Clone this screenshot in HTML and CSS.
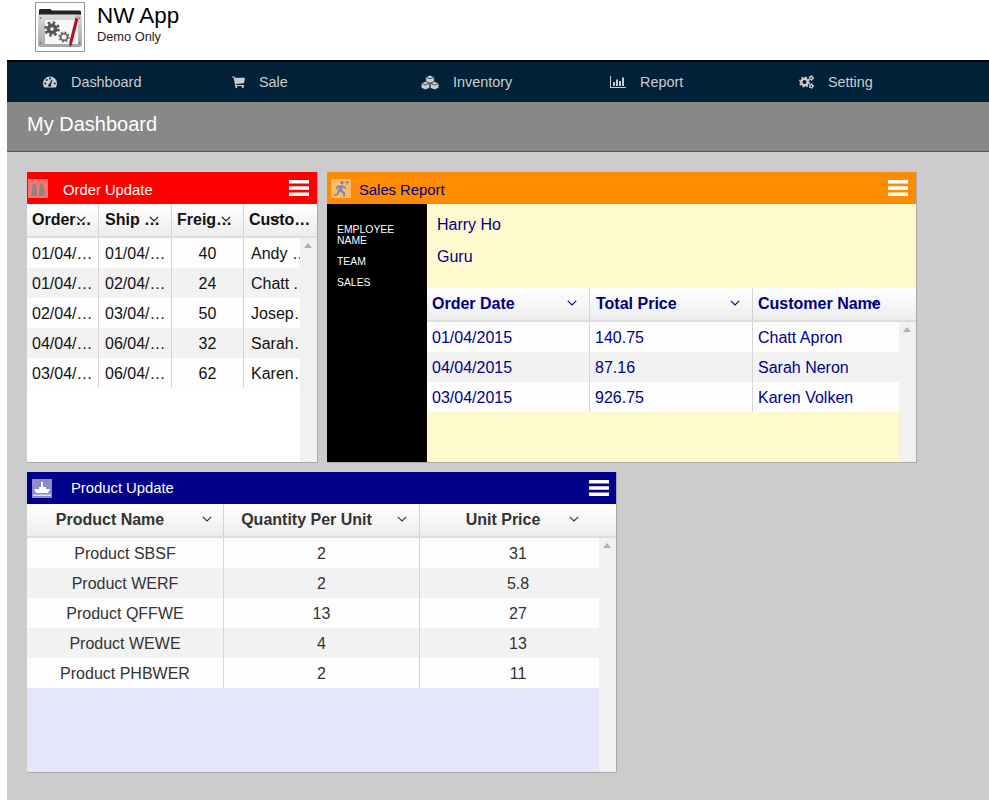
FILE: index.html
```html
<!DOCTYPE html>
<html lang="en">
<head>
    <meta charset="UTF-8">
    <meta name="viewport" content="width=device-width, initial-scale=1.0">
    <title>NW App</title>
    <link rel="stylesheet" href="styles.css">
</head>
<body>
    <!-- shared icons -->
    <svg class="sprite" aria-hidden="true">
        <symbol id="chev" viewBox="0 0 10 6"><path d="M.8.8 5 5 9.2.8" fill="none" stroke="currentColor" stroke-width="1.1"/></symbol>
        <symbol id="burger" viewBox="0 0 20 16"><path d="M0 0h20v3.6H0zM0 6.2h20v3.6H0zM0 12.4h20V16H0z" fill="#fff"/></symbol>
    </svg>

    <header class="brand">
        <div class="brand-logo">
            <svg viewBox="0 0 48 48" width="48" height="48">
                <defs>
                    <linearGradient id="folder" x1="0" y1="0" x2="0" y2="1">
                        <stop offset="0" stop-color="#dcdcdc"/>
                        <stop offset="1" stop-color="#a6a6a6"/>
                    </linearGradient>
                </defs>
                <path d="M3 7.500c0-1 .7-1.500 1.500-1.500h10l1.500 1.500h27.500c1 0 1.500.7 1.500 1.500v3H3z" fill="#222"/>
                <rect x="2" y="11.500" width="44" height="32.500" rx="2.500" fill="url(#folder)"/>
                <path d="M9 17h33v24H9z" fill="#f7f7f7"/>
                <circle cx="4.500" cy="15" r=".9" fill="#777"/><circle cx="43.500" cy="15" r=".9" fill="#777"/>
                <circle cx="4.500" cy="40" r=".9" fill="#777"/><circle cx="43.500" cy="40" r=".9" fill="#777"/>
                <circle cx="16" cy="26" r="5" fill="#555" stroke="#555" stroke-width="1"/>
                <circle cx="16" cy="26" r="6.500" fill="none" stroke="#555" stroke-width="2.500" stroke-dasharray="2.500 2.600"/>
                <circle cx="16" cy="26" r="1.800" fill="#f7f7f7"/>
                <circle cx="28" cy="34" r="3.400" fill="none" stroke="#666" stroke-width="1.800"/>
                <circle cx="28" cy="34" r="4.800" fill="none" stroke="#666" stroke-width="1.600" stroke-dasharray="1.800 1.970"/>
                <path d="M39.500 14.500 42.500 15.800 36 41l-2.800-1.300z" fill="#b3141c"/>
                <path d="M39.500 14.500 40.500 11.500l3 1.300-1 3z" fill="#e8a0b8"/>
                <path d="M33.200 39.700 36 41l-2 3z" fill="#2b2b2b"/>
            </svg>
        </div>
        <div class="brand-text">
            <div class="brand-name">NW App</div>
            <div class="brand-sub">Demo Only</div>
        </div>
    </header>

    <div class="page">
        <nav class="nav">
            <a class="nav-item">
                <svg width="14" height="12" viewBox="0 0 14 12">
                    <path d="M7 .4A7 7 0 0 0 0 7.400c0 1.600.5 3.100 1.400 4.200h11.200A7 7 0 0 0 14 7.400 7 7 0 0 0 7 .4z" fill="#ccc"/>
                    <g fill="#002138">
                        <circle cx="2.300" cy="7.500" r="1"/><circle cx="3.700" cy="4" r="1"/><circle cx="7" cy="2.600" r="1"/><circle cx="11.700" cy="7.500" r="1"/>
                        <circle cx="6.700" cy="9.300" r="1.500"/>
                        <path d="M6 8.800 8.600 3.700l1 .4L7.400 9.400z"/>
                    </g>
                </svg>
                Dashboard
            </a>
            <a class="nav-item">
                <svg width="13" height="12" viewBox="0 0 13 12">
                    <path d="M0 .4h2.400l.4 1.400H13l-1 5.400-8 .8.2 1H12v1H3.300L1.600 1.400H0z" fill="#ccc"/>
                    <circle cx="4.300" cy="10.900" r="1.100" fill="#ccc"/><circle cx="10.800" cy="10.900" r="1.100" fill="#ccc"/>
                </svg>
                Sale
            </a>
            <a class="nav-item">
                <svg width="18" height="15" viewBox="0 0 18 15">
                    <g fill="#ccc" stroke="#002138" stroke-width=".6">
                        <path d="M9 .2 13.200 2v4.800L9 8.500 4.800 6.800V2z"/>
                        <path d="M4.500 6.400 8.800 8.200v4.700L4.500 14.800.2 12.900V8.200z"/>
                        <path d="M13.500 6.400 17.800 8.200v4.700l-4.300 1.900-4.300-1.900V8.200z"/>
                    </g>
                    <path d="M5.500 2.300 9 3.700l3.500-1.400M.9 8.500l3.600 1.500L8 8.500M9.900 8.500l3.600 1.500L17 8.500" fill="none" stroke="#002138" stroke-width=".7"/>
                </svg>
                Inventory
            </a>
            <a class="nav-item">
                <svg width="16" height="12" viewBox="0 0 16 12">
                    <path d="M0 0h1v11h15v1H0z" fill="#ccc"/>
                    <path d="M3 6h2v4H3zM6 3.500h2V10H6zM9 5h2v5H9zM12 1.500h2V10h-2z" fill="#ccc"/>
                </svg>
                Report
            </a>
            <a class="nav-item">
                <svg width="15" height="14" viewBox="0 0 15 14">
                    <circle cx="5.500" cy="7" r="3.200" fill="none" stroke="#ccc" stroke-width="2.400"/>
                    <circle cx="5.500" cy="7" r="4.700" fill="none" stroke="#ccc" stroke-width="1.600" stroke-dasharray="1.850 1.840"/>
                    <circle cx="12.300" cy="3" r="1.500" fill="none" stroke="#ccc" stroke-width="1.300"/>
                    <circle cx="12.300" cy="3" r="2.400" fill="none" stroke="#ccc" stroke-width="1" stroke-dasharray="1.100 1.410"/>
                    <circle cx="12.300" cy="11" r="1.500" fill="none" stroke="#ccc" stroke-width="1.300"/>
                    <circle cx="12.300" cy="11" r="2.400" fill="none" stroke="#ccc" stroke-width="1" stroke-dasharray="1.100 1.410"/>
                </svg>
                Setting
            </a>
        </nav>

        <h1 class="page-title">My Dashboard</h1>

        <main class="board">
            <!-- Order Update -->
            <section class="panel panel-order">
                <div class="panel-head">
                    <svg class="panel-icon" viewBox="0 0 20 19">
                        <rect width="20" height="19" fill="#fff" opacity=".45"/>
                        <path d="M3 17 4.500 7l2-4 2 4 .7 10zM11 17l.5-10 2-4 2 4 1.500 10z" fill="#888"/>
                    </svg>
                    <span class="panel-title">Order Update</span>
                    <svg class="burger"><use href="#burger"/></svg>
                </div>
                <div class="grid-head cols-order">
                    <div class="cell">Order Date<svg class="chev"><use href="#chev"/></svg></div>
                    <div class="cell">Ship Date<svg class="chev"><use href="#chev"/></svg></div>
                    <div class="cell">Freig…<svg class="chev"><use href="#chev"/></svg></div>
                    <div class="cell">Customer Name<svg class="chev chev-last"><use href="#chev"/></svg></div>
                </div>
                <div class="grid-body">
                    <div class="row cols-order"><div class="cell">01/04/2015</div><div class="cell">01/04/2015</div><div class="cell center">40</div><div class="cell pad">Andy Roberts</div></div>
                    <div class="row cols-order"><div class="cell">01/04/2015</div><div class="cell">02/04/2015</div><div class="cell center">24</div><div class="cell pad">Chatt Apron</div></div>
                    <div class="row cols-order"><div class="cell">02/04/2015</div><div class="cell">03/04/2015</div><div class="cell center">50</div><div class="cell pad">Joseph Rich</div></div>
                    <div class="row cols-order"><div class="cell">04/04/2015</div><div class="cell">06/04/2015</div><div class="cell center">32</div><div class="cell pad">Sarah Neron</div></div>
                    <div class="row cols-order"><div class="cell">03/04/2015</div><div class="cell">06/04/2015</div><div class="cell center">62</div><div class="cell pad">Karen Volken</div></div>
                    <div class="scrollbar"></div>
                </div>
            </section>

            <!-- Sales Report -->
            <section class="panel panel-sales">
                <div class="panel-head">
                    <svg class="panel-icon" viewBox="0 0 20 19">
                        <rect width="20" height="19" fill="#fff" opacity=".4"/>
                        <g fill="#7d86b8">
                            <circle cx="11" cy="3.800" r="1.800"/>
                            <path d="M8 6.500h4.500l3 2.500-1 1-2.500-1.800-1 3 3 2.300V18h-1.600l-.4-3.500-3-2-2 3.500-3.500 1-.5-1.500 3-1 2-6-1.500.5-1 2.500L5 9l1.200-2.800z"/>
                            <path d="M15.500 1.500h1v1.500H18v1h-1.500v1.500h-1V4H14V3h1.500z"/>
                        </g>
                    </svg>
                    <span class="panel-title">Sales Report</span>
                    <svg class="burger"><use href="#burger"/></svg>
                </div>
                <div class="sales-layout">
                    <ul class="sales-labels">
                        <li>EMPLOYEE NAME</li>
                        <li>TEAM</li>
                        <li>SALES</li>
                    </ul>
                    <div class="sales-main">
                        <div class="sales-info">
                            <div>Harry Ho</div>
                            <div>Guru</div>
                        </div>
                        <div class="grid-head cols-sales">
                            <div class="cell">Order Date<svg class="chev"><use href="#chev"/></svg></div>
                            <div class="cell">Total Price<svg class="chev"><use href="#chev"/></svg></div>
                            <div class="cell">Customer Name<svg class="chev chev-last"><use href="#chev"/></svg></div>
                        </div>
                        <div class="grid-body">
                            <div class="row cols-sales"><div class="cell">01/04/2015</div><div class="cell">140.75</div><div class="cell">Chatt Apron</div></div>
                            <div class="row cols-sales"><div class="cell">04/04/2015</div><div class="cell">87.16</div><div class="cell">Sarah Neron</div></div>
                            <div class="row cols-sales"><div class="cell">03/04/2015</div><div class="cell">926.75</div><div class="cell">Karen Volken</div></div>
                            <div class="scrollbar"></div>
                        </div>
                    </div>
                </div>
            </section>

            <!-- Product Update -->
            <section class="panel panel-product">
                <div class="panel-head">
                    <svg class="panel-icon" viewBox="0 0 20 19">
                        <rect width="20" height="19" fill="#fff" opacity=".55"/>
                        <path d="M9 3h2v5h3v2H7V8h2z" fill="#fff"/>
                        <path d="M2 10h16l-2 4H4z" fill="#fff"/>
                        <path d="M1 15.500h18V17H1z" fill="#dfe0f5"/>
                    </svg>
                    <span class="panel-title">Product Update</span>
                    <svg class="burger"><use href="#burger"/></svg>
                </div>
                <div class="grid-head cols-product">
                    <div class="cell center head-wide">Product Name<svg class="chev"><use href="#chev"/></svg></div>
                    <div class="cell center head-wide">Quantity Per Unit<svg class="chev"><use href="#chev"/></svg></div>
                    <div class="cell center head-wide">Unit Price<svg class="chev chev-last"><use href="#chev"/></svg></div>
                </div>
                <div class="grid-body">
                    <div class="row cols-product"><div class="cell center">Product SBSF</div><div class="cell center">2</div><div class="cell center">31</div></div>
                    <div class="row cols-product"><div class="cell center">Product WERF</div><div class="cell center">2</div><div class="cell center">5.8</div></div>
                    <div class="row cols-product"><div class="cell center">Product QFFWE</div><div class="cell center">13</div><div class="cell center">27</div></div>
                    <div class="row cols-product"><div class="cell center">Product WEWE</div><div class="cell center">4</div><div class="cell center">13</div></div>
                    <div class="row cols-product"><div class="cell center">Product PHBWER</div><div class="cell center">2</div><div class="cell center">11</div></div>
                    <div class="scrollbar"></div>
                </div>
            </section>
        </main>
    </div>
</body>
</html>
```
FILE: styles.css
```css
body {
    font-family: "Liberation Sans", Arial, sans-serif;
    margin: 0;
    padding: 0;
    background-color: #fff;
    color: #333;
}
.sprite {
    display: none;
}
.brand {
    display: flex;
    gap: 12px;
    height: 60px;
    padding: 2px 0 0 35px;
    box-sizing: border-box;
}
.brand-logo {
    width: 50px;
    height: 50px;
    box-sizing: border-box;
    border: 1px solid #999;
    overflow: hidden;
}
.brand-logo svg {
    display: block;
}
.brand-text {
    padding-top: 1px;
}
.brand-name {
    font-size: 22.4px;
    line-height: 26px;
    color: #000;
}
.brand-sub {
    font-size: 12.8px;
    line-height: 16px;
    color: #222;
}
.page {
    margin-left: 7px;
}
.nav {
    display: flex;
    height: 40px;
    padding-left: 36px;
    background-color: #002138;
    border-top: 2px solid #000;
}
.nav-item {
    display: flex;
    align-items: center;
    gap: 14px;
    width: 189px;
    font-size: 14.4px;
    color: #ccc;
}
.page-title {
    margin: 0;
    padding: 10px 20px 15px;
    font-size: 20px;
    line-height: 24px;
    font-weight: normal;
    color: #fff;
    background-color: #888;
    border-bottom: 1px solid #555;
}
.board {
    display: grid;
    grid-template-columns: 291px 590px;
    grid-template-rows: 291px 301px;
    gap: 9px;
    padding: 20px 20px 27px;
    background-color: #ccc;
    align-content: start;
}
.panel {
    display: flex;
    flex-direction: column;
    box-sizing: border-box;
    border-right: 1px solid #aaa;
    border-bottom: 1px solid #aaa;
    min-width: 0;
}
.panel-head {
    display: flex;
    align-items: center;
    flex: none;
    height: 32px;
    color: #fff;
}
.panel-icon {
    width: 20px;
    height: 19px;
    flex: none;
}
.panel-title {
    font-size: 14.8px;
}
.burger {
    width: 20px;
    height: 16px;
    margin-left: auto;
    margin-right: 8px;
    flex: none;
}

/* per panel colours */
.panel-order {
    background-color: #fff;
    color: #111;
}
.panel-order .panel-head {
    background-color: #f00;
    padding-left: 1px;
}
.panel-order .panel-title {
    margin-left: 15px;
    padding-top: 3px;
}
.panel-order .cell:nth-child(2) {
    padding-left: 6px;
}
.panel-sales {
    background-color: #fffacd;
    color: #00008b;
    grid-column: 2;
}
.panel-sales .panel-head {
    background-color: #ff8c00;
    color: #00008b;
    padding-left: 4px;
}
.panel-sales .panel-title {
    margin-left: 8px;
    padding-top: 3px;
}
.panel-product {
    background-color: #e6e6fa;
    grid-column: 1 / span 2;
    width: 590px;
}
.panel-product .panel-head {
    background-color: #00008b;
    padding-left: 5px;
}
.panel-product .panel-title {
    margin-left: 19px;
}
.panel-product .burger {
    margin-right: 7px;
}

/* grids */
.cols-order {
    display: grid;
    grid-template-columns: 72px 73px 72px 1fr;
}
.cols-sales {
    display: grid;
    grid-template-columns: 163px 163px 1fr;
}
.cols-product {
    display: grid;
    grid-template-columns: 197px 196px 1fr;
}
.grid-head {
    flex: none;
    height: 34px;
    box-sizing: border-box;
    background: linear-gradient(#fff, #ececec);
    border-bottom: 2px solid #ddd;
    font-size: 16px;
    font-weight: bold;
    line-height: 31px;
}
.grid-head .cell {
    position: relative;
}
.cell {
    min-width: 0;
    padding: 0 4px 0 5px;
    box-sizing: border-box;
    white-space: nowrap;
    overflow: hidden;
    text-overflow: ellipsis;
    border-right: 1px solid #d4d4d4;
}
.cell:last-child {
    border-right: none;
}
.center {
    text-align: center;
    padding-right: 5px;
}
.pad {
    padding-left: 7px;
    padding-right: 6px;
}
.grid-head .head-wide {
    padding-right: 35px;
}
.chev {
    position: absolute;
    top: 12px;
    right: 12px;
    width: 10px;
    height: 6px;
}
.chev-last {
    right: 37px;
}
.panel-product .cell:first-child .chev {
    right: 11px;
}
.grid-body {
    position: relative;
    flex: 1;
    overflow: hidden;
}
.row {
    height: 30px;
    font-size: 16px;
    line-height: 30px;
    background-color: #fdfdfd;
}
.row .cell {
    height: 30px;
    padding-top: 1px;
}
.row:nth-child(even) {
    background-color: #f2f2f2;
}
.scrollbar {
    position: absolute;
    top: 0;
    right: 0;
    bottom: 0;
    width: 17px;
    background-color: #f1f1f1;
}
.scrollbar::before {
    content: "";
    position: absolute;
    top: 5px;
    left: 4px;
    border-left: 4px solid transparent;
    border-right: 4px solid transparent;
    border-bottom: 5px solid #b0b0b0;
}

/* sales report */
.sales-layout {
    display: flex;
    flex: 1;
    min-height: 0;
}
.sales-labels {
    width: 100px;
    flex: none;
    box-sizing: border-box;
    margin: 0;
    padding: 20px 10px 0;
    list-style: none;
    background-color: #000;
    color: #fff;
    font-size: 10.4px;
    line-height: 11px;
}
.sales-labels li {
    margin-bottom: 10px;
}
.sales-main {
    display: flex;
    flex-direction: column;
    flex: 1;
    min-width: 0;
}
.sales-info {
    flex: none;
    height: 84px;
    box-sizing: border-box;
    padding: 5px 10px 0;
    font-size: 16px;
    line-height: 32px;
}
.sales-main .grid-head {
    color: #000080;
}
.sales-main .grid-head .cell:nth-child(2) {
    padding-left: 6px;
}
```
